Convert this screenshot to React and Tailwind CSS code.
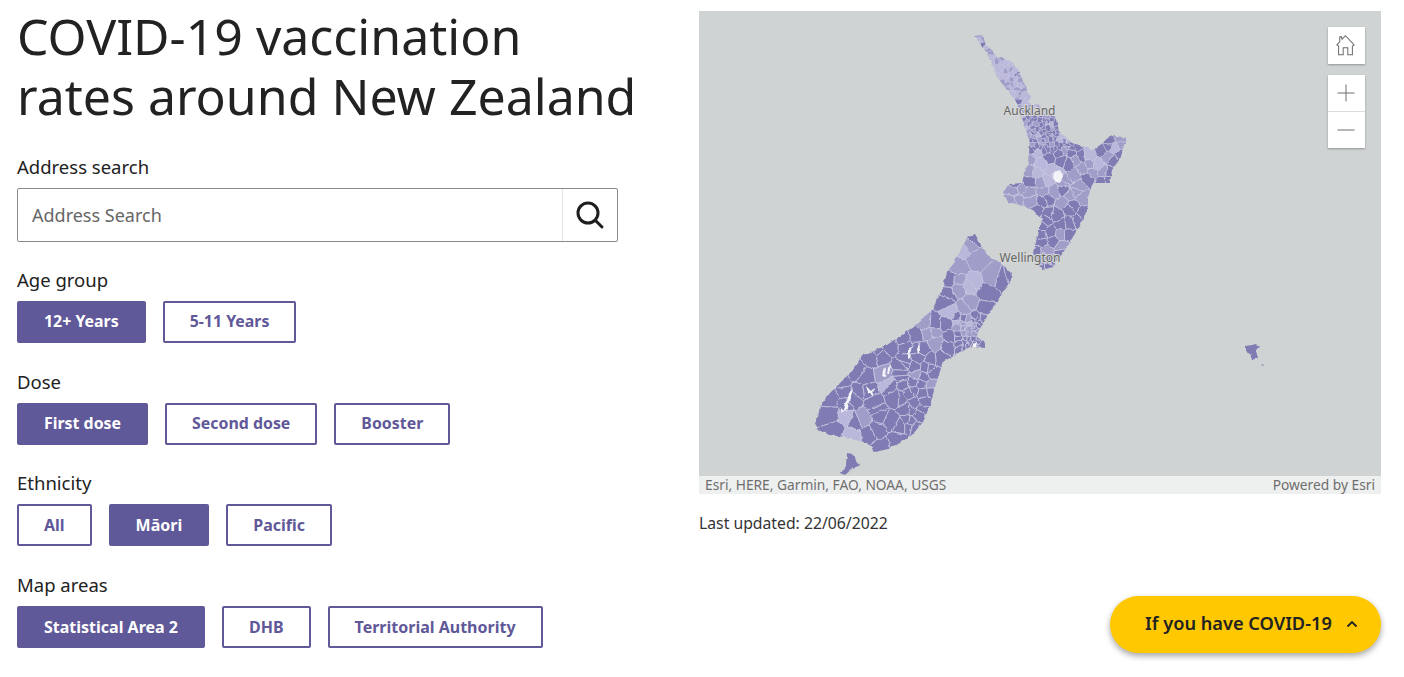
const DARK = "#7f7cb3";
const MID = "#a09ec9";
const LIGHT = "#b9b8da";

const northIsland = [[975,36],[983,35],[985,43],[997,57],[1008,60],[1013,63],[1022,78],[1030,97],[1027,103],[1040,105],[1050,112],[1055,117],[1060,133],[1073,143],[1093,150],[1103,143],[1113,135],[1126,138],[1120,160],[1112,170],[1110,183],[1093,183],[1088,197],[1088,207],[1083,220],[1067,247],[1053,267],[1042,270],[1033,253],[1042,220],[1033,210],[1020,205],[1008,202],[1003,192],[1010,184],[1022,183],[1028,163],[1030,143],[1025,127],[1017,103],[997,77],[987,53]];
const southIsland = [[975,234],[982,247],[987,255],[1000,263],[1013,275],[1005,290],[991,310],[982,325],[978,332],[977,337],[985,343],[985,348],[970,347],[960,352],[943,362],[935,387],[930,405],[923,422],[912,435],[900,443],[888,449],[875,452],[867,443],[850,438],[830,435],[818,430],[815,422],[823,402],[830,393],[850,373],[863,355],[887,345],[913,327],[932,310],[942,290],[947,273],[962,248],[967,238]];
const stewart = [[847,453],[853,454],[857,460],[860,465],[852,469],[845,475],[841,473],[846,466]];
const chatham = [[1246,346],[1256,344],[1260,347],[1256,351],[1258,358],[1252,360],[1250,353],[1246,351]];

const lightZones = [
  [[965,236],[985,250],[994,262],[972,290],[962,300],[952,292],[958,262]],
  [[838,418],[852,417],[856,438],[842,433]],
  [[924,322],[934,312],[938,318],[930,328]],
];
const midZones = [
  [[994,262],[1000,266],[978,306],[950,322],[938,312],[952,292],[962,300],[972,290]],
  [[925,330],[940,325],[948,338],[935,345],[925,340]],
  [[876,372],[892,352],[900,360],[888,386],[878,388]],
  [[995,300],[1005,296],[995,320],[982,318]],
  [[957,320],[973,318],[975,335],[960,338]],
];
const darkSpots = [
  [[944,276],[950,276],[952,290],[944,292]],
  [[943,295],[952,295],[952,303],[943,303]],
];

function inside(p, poly) {
  let hit = false;
  for (let i = 0, j = poly.length - 1; i < poly.length; j = i++) {
    const [xi, yi] = poly[i];
    const [xj, yj] = poly[j];
    if (yi > p[1] !== yj > p[1] && p[0] < ((xj - xi) * (p[1] - yi)) / (yj - yi) + xi) hit = !hit;
  }
  return hit;
}

function makeRandom(seed) {
  let s = seed;
  return () => {
    s = (s + 0x6d2b79f5) | 0;
    let t = Math.imul(s ^ (s >>> 15), 1 | s);
    t = (t + Math.imul(t ^ (t >>> 7), 61 | t)) ^ t;
    return ((t ^ (t >>> 14)) >>> 0) / 4294967296;
  };
}

// cut a polygon down to the side of the bisector that is nearer to a
function clipToSeed(poly, a, b) {
  const mx = (a[0] + b[0]) / 2;
  const my = (a[1] + b[1]) / 2;
  const nx = b[0] - a[0];
  const ny = b[1] - a[1];
  const out = [];
  for (let i = 0; i < poly.length; i++) {
    const p = poly[i];
    const q = poly[(i + 1) % poly.length];
    const dp = (p[0] - mx) * nx + (p[1] - my) * ny;
    const dq = (q[0] - mx) * nx + (q[1] - my) * ny;
    if (dp <= 0) out.push(p);
    if (dp < 0 !== dq < 0) {
      const t = dp / (dp - dq);
      out.push([p[0] + (q[0] - p[0]) * t, p[1] + (q[1] - p[1]) * t]);
    }
  }
  return out;
}

function buildCells(seeds) {
  return seeds.map((s) => {
    let poly = [[960,25],[1140,25],[1140,285],[960,285]];
    if (s.south) poly = [[805,225],[1025,225],[1025,460],[805,460]];
    for (const o of seeds) {
      if (o === s || o.south !== s.south) continue;
      if (Math.abs(o.x - s.x) > 60 || Math.abs(o.y - s.y) > 60) continue;
      poly = clipToSeed(poly, [s.x, s.y], [o.x, o.y]);
      if (poly.length === 0) break;
    }
    return {
      d: "M" + poly.map((p) => p[0].toFixed(1) + " " + p[1].toFixed(1)).join("L") + "Z",
      fill: s.fill,
      fine: !s.south && s.y < 150,
    };
  });
}

function northTone(x, y, r) {
  const v = r();
  if (y < 112) return v < 0.55 ? LIGHT : v < 0.9 ? MID : DARK;
  if (y < 152) return v < 0.55 ? DARK : v < 0.8 ? MID : LIGHT;
  if (x > 1086 && x < 1110 && y < 172) return v < 0.8 ? MID : LIGHT;
  if (x < 1030 && y > 165 && y < 212) return v < 0.8 ? MID : DARK;
  if (x > 1028 && x < 1062 && y > 160 && y < 182) return LIGHT;
  if (y > 225 && x > 1040) return v < 0.6 ? DARK : MID;
  return v < 0.72 ? DARK : MID;
}

function southTone(x, y, r) {
  const v = r();
  const p = [x, y];
  if (darkSpots.some((z) => inside(p, z))) return DARK;
  if (lightZones.some((z) => inside(p, z))) return v < 0.75 ? LIGHT : MID;
  if (midZones.some((z) => inside(p, z))) return v < 0.85 ? MID : LIGHT;
  return v < 0.95 ? DARK : MID;
}

function jitterGrid(x0, y0, x1, y1, step, r) {
  const pts = [];
  for (let y = y0; y < y1; y += step) {
    for (let x = x0; x < x1; x += step) {
      pts.push([x + (r() - 0.5) * step * 0.9, y + (r() - 0.5) * step * 0.9]);
    }
  }
  return pts;
}

const rnd = makeRandom(19);
const seeds = [];
const addSeeds = (box, step, south) => {
  const land = south ? southIsland : northIsland;
  const tone = south ? southTone : northTone;
  for (const [x, y] of jitterGrid(box[0], box[1], box[2], box[3], step, rnd)) {
    if (inside([x, y], land)) seeds.push({ x, y, south, fill: tone(x, y, rnd) });
  }
};
addSeeds([975, 35, 1060, 112], 4.5, false);
addSeeds([1020, 112, 1075, 152], 4, false);
addSeeds([1000, 152, 1130, 275], 10, false);
addSeeds([1075, 130, 1130, 152], 8, false);
addSeeds([945, 234, 1018, 325], 14, true);
addSeeds([812, 320, 905, 455], 14, true);
addSeeds([905, 325, 960, 365], 11, true);
addSeeds([960, 320, 990, 350], 4.5, true);
addSeeds([905, 365, 945, 435], 9, true);
const mapCells = buildCells(seeds);

const lakes = [
  [[1054,172],[1060,170],[1063,176],[1060,183],[1056,182],[1053,178]],
  [[908,348],[911,347],[910,357],[908,358]],
  [[919,345],[920,351],[918,354],[917,349]],
  [[883,370],[886,367],[885,377],[882,376]],
  [[888,368],[891,364],[889,374],[887,375]],
  [[866,386],[871,391],[874,388],[873,396],[868,393]],
  [[850,392],[853,388],[850,402],[845,411],[843,408]],
  [[840,407],[844,411],[842,413]],
  [[973,344],[977,342],[976,348],[972,348]],
];

function NzMap() {
  return (
    <svg viewBox="699 11 682 465" className="block h-[465px] w-[682px]">
      <defs>
        <clipPath id="nz-land">
          <polygon points={northIsland.join(" ")} />
          <polygon points={southIsland.join(" ")} />
        </clipPath>
        <filter id="nz-rough" x="0" y="0" width="100%" height="100%" filterUnits="objectBoundingBox">
          <feTurbulence type="fractalNoise" baseFrequency="0.18" numOctaves="2" seed="4" />
          <feDisplacementMap in="SourceGraphic" scale="3.5" xChannelSelector="R" yChannelSelector="G" />
          <feGaussianBlur stdDeviation="0.3" />
        </filter>
      </defs>
      <g filter="url(#nz-rough)">
        <rect x="699" y="11" width="682" height="465" fill="none" />
        <g clipPath="url(#nz-land)">
          {mapCells.map((c, i) => (
            <path key={i} d={c.d} fill={c.fill} stroke="#c8c7e2" strokeWidth={c.fine ? 0.5 : 0.8} />
          ))}
          {lakes.map((l, i) => (
            <polygon key={i} points={l.join(" ")} fill="#f4f4f8" />
          ))}
        </g>
        <polygon points={stewart.join(" ")} fill={DARK} />
        <polygon points={chatham.join(" ")} fill={DARK} />
        <polygon points="1261,364 1263,364 1262,366" fill={DARK} />
      </g>
      <text x="1029.5" y="115" textAnchor="middle" fontSize="12" fill="#666" stroke="#d6d8d8" strokeWidth="2" paintOrder="stroke" fontFamily="'Noto Sans', sans-serif">Auckland</text>
      <text x="1030" y="262" textAnchor="middle" fontSize="12" fill="#666" stroke="#d6d8d8" strokeWidth="2" paintOrder="stroke" fontFamily="'Noto Sans', sans-serif">Wellington</text>
    </svg>
  );
}

function Choice({ active, size, children }) {
  return active ? (
    <button className={"h-[42px] rounded-[2px] border-2 border-[#5f5899] bg-[#5f5899] px-[25px] font-bold text-white " + size}>{children}</button>
  ) : (
    <button className={"h-[42px] rounded-[2px] border-2 border-[#5f5899] bg-white px-[25px] font-bold text-[#5f5899] " + size}>{children}</button>
  );
}

function Group({ label, options, active, size = "text-[16px]" }) {
  return (
    <div className="mt-[24.4px]">
      <div className="h-[35px] text-[18.5px] leading-[28px] text-[#222]">{label}</div>
      <div className="flex gap-[17px]">
        {options.map((o) => (
          <Choice key={o} active={o === active} size={size}>{o}</Choice>
        ))}
      </div>
    </div>
  );
}

export default function App() {
  return (
    <div className="relative flex h-[677px] w-full overflow-hidden bg-white font-['Noto_Sans','Open_Sans',sans-serif]">
      <div className="w-[699px] shrink-0 pl-[17px] pt-[6px]">
        <h1 className="text-[50px] font-normal leading-[60px] text-[#222] font-['Noto_Sans',sans-serif]">
          COVID-19 vaccination
          <br />
          rates around New Zealand
        </h1>
        <div className="mt-[28px] h-[34px] text-[18.5px] leading-[26px] text-[#222]">Address search</div>
        <div className="mb-[0.5px] flex h-[54px] w-[601px] items-center rounded-[2px] border border-[#8a8a8a]">
          <span className="flex-1 pl-[14px] text-[18px] text-[#666]">Address Search</span>
          <span className="flex h-full w-[55px] items-center justify-center border-l border-[#e2e2e2]">
            <svg width="30" height="30" viewBox="0 0 30 30" fill="none" stroke="#1f1f1f" strokeWidth="3" strokeLinecap="round" className="-ml-[1px]">
              <circle cx="13" cy="13" r="10" />
              <path d="M20.5 20.5l6.5 6.5" />
            </svg>
          </span>
        </div>
        <Group label="Age group" options={["12+ Years", "5-11 Years"]} active="12+ Years" size="text-[15.9px]" />
        <Group label="Dose" options={["First dose", "Second dose", "Booster"]} active="First dose" size="text-[15.9px]" />
        <Group label="Ethnicity" options={["All", "Māori", "Pacific"]} active="Māori" />
        <Group label="Map areas" options={["Statistical Area 2", "DHB", "Territorial Authority"]} active="Statistical Area 2" />
      </div>

      <div className="w-[682px] shrink-0 pt-[11px]">
        <div className="relative h-[483px] bg-[#cfd3d3]">
          <NzMap />
          <div className="absolute right-[16px] top-[16px] flex h-[37px] w-[37px] items-center justify-center bg-white shadow-[0_1px_2px_rgba(0,0,0,0.3)]">
            <svg width="23" height="23" viewBox="0 0 20 20" fill="none" stroke="#6e6e6e" strokeWidth="0.9" className="-ml-[2px]">
              <path d="M2.5 9.5L5 6.8V2.5h1.5L7 4.5 10 1.5l7.5 8-1.5 1V18h-4v-6H8v6H4v-7.5z" />
            </svg>
          </div>
          <div className="absolute right-[16px] top-[64px] w-[37px] bg-white shadow-[0_1px_2px_rgba(0,0,0,0.3)]">
            <div className="flex h-[37px] items-center justify-center border-b border-[#dcdcdc]">
              <svg width="18" height="18" viewBox="0 0 18 18" stroke="#6e6e6e" strokeWidth="1" className="-ml-[2px]"><path d="M0.5 9h17M9 0.5v17" /></svg>
            </div>
            <div className="flex h-[36px] items-center justify-center">
              <svg width="18" height="18" viewBox="0 0 18 18" stroke="#6e6e6e" strokeWidth="1" className="-ml-[2px]"><path d="M0.5 9h17" /></svg>
            </div>
          </div>
          <div className="flex h-[18px] items-center justify-between bg-[#eef0f0] px-[6px] text-[13.75px] text-[#6e6e6e]">
            <span>Esri, HERE, Garmin, FAO, NOAA, USGS</span>
            <span>Powered by Esri</span>
          </div>
        </div>
        <p className="mt-[18px] text-[15.75px] leading-[22px] text-[#333]">Last updated: 22/06/2022</p>
      </div>

      <button className="absolute left-[1110px] top-[596px] flex h-[57px] w-[271px] items-center gap-[14px] rounded-full bg-[#ffc800] pb-[2px] pl-[35px] text-[18.2px] font-semibold text-[#222] shadow-[0_3px_6px_rgba(0,0,0,0.35)]">
        If you have COVID-19
        <svg width="12" height="8" viewBox="0 0 12 8" fill="none" stroke="#222" strokeWidth="1.8"><path d="M1.5 6.5L6 2l4.5 4.5" /></svg>
      </button>
    </div>
  );
}
